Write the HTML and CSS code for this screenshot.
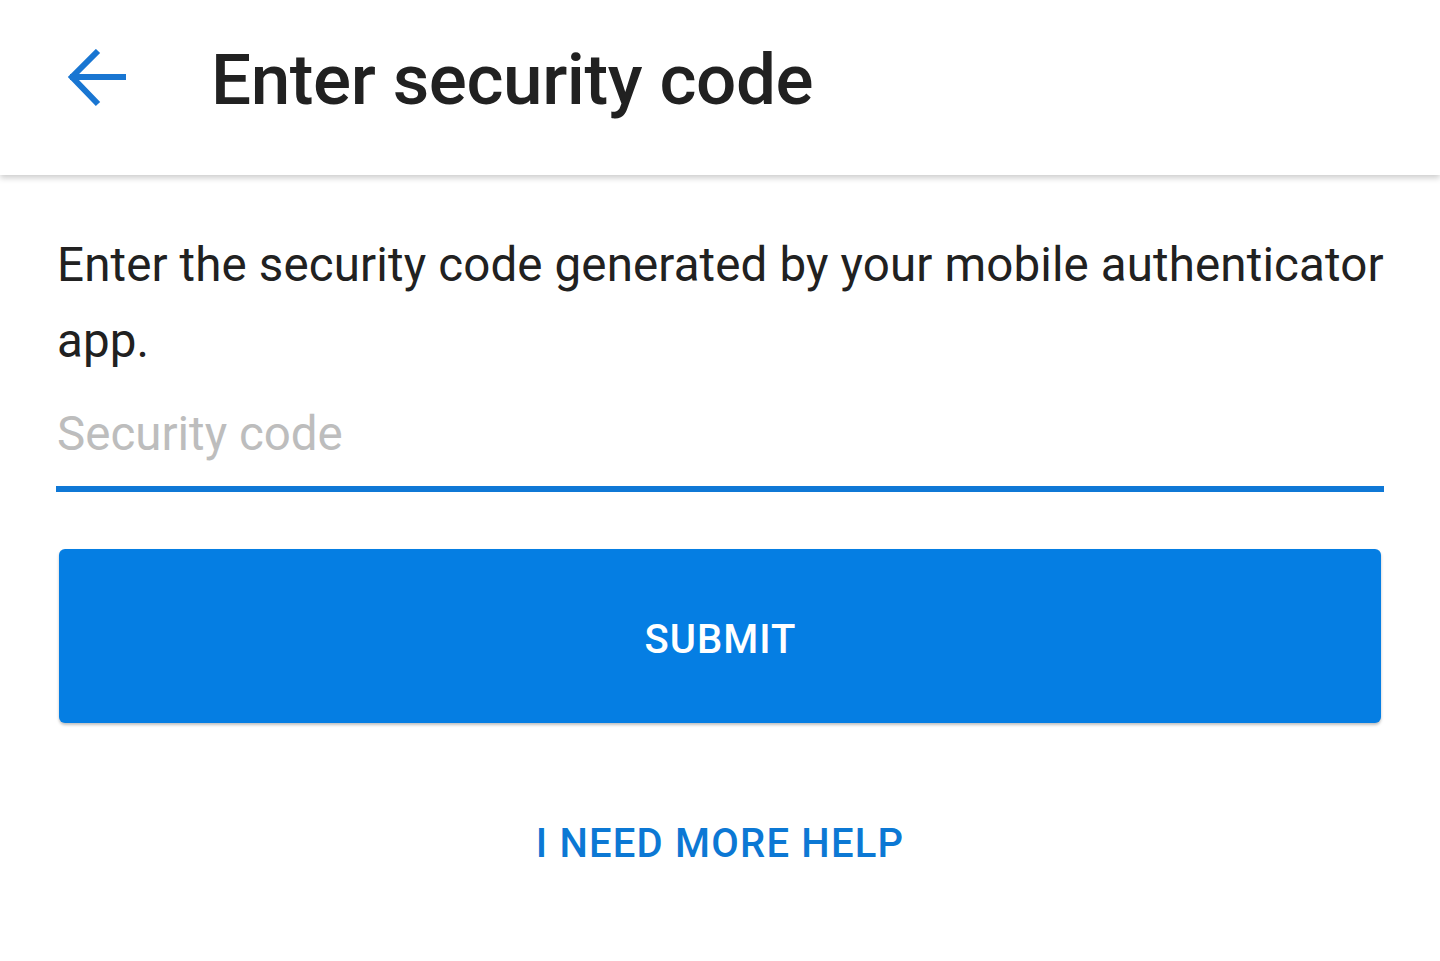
FILE: index.html
```html
<!DOCTYPE html>
<html lang="en">
<head>
<meta charset="utf-8">
<title>Enter security code</title>
<link rel="stylesheet" href="styles.css">
</head>
<body>
<header class="appbar">
  <button class="back" aria-label="Back">
    <svg width="62" height="62" viewBox="0 0 62 62" aria-hidden="true">
      <path d="M4 28H60" fill="none" stroke="#1976d2" stroke-width="6"/>
      <path d="M32 2L6 28L32 55" fill="none" stroke="#1976d2" stroke-width="6"/>
    </svg>
  </button>
  <h1 class="title">Enter security code</h1>
</header>
<main class="content">
  <p class="intro">Enter the security code generated by your mobile authenticator app.</p>
  <div class="field">
    <span class="placeholder">Security code</span>
  </div>
  <button class="submit">SUBMIT</button>
  <div class="help-row">
    <a class="help" href="#">I NEED MORE HELP</a>
  </div>
</main>
</body>
</html>
```
FILE: styles.css
```css
html, body {
  margin: 0;
  padding: 0;
  background: #ffffff;
  font-family: Roboto, "Noto Sans", "Liberation Sans", sans-serif;
}

.appbar {
  height: 175px;
  display: flex;
  align-items: center;
  background: #ffffff;
  box-shadow: 0 3px 6px rgba(0, 0, 0, 0.2);
  position: relative;
  z-index: 1;
}

.back {
  background: none;
  border: 0;
  padding: 0;
  margin: 49px 0 0 66px;
  width: 62px;
  height: 62px;
  display: flex;
  align-self: flex-start;
  cursor: pointer;
}

.title {
  margin: 0 0 0 83px;
  font-size: 71px;
  letter-spacing: -0.4px;
  font-weight: 500;
  color: #212121;
  line-height: 1;
  padding-bottom: 16px;
}

.content {
  padding: 52px 56px 0 56px;
}

.intro {
  margin: 0;
  font-size: 47.5px;
  letter-spacing: 0.13px;
  line-height: 76px;
  color: #212121;
  padding-left: 1px;
}

.field {
  margin-top: 27px;
  border-bottom: 6px solid #0f78d6;
  padding-bottom: 24px;
}

.placeholder {
  display: block;
  font-size: 47.5px;
  line-height: 56px;
  color: #bdbdbd;
  padding-left: 1px;
}

.submit {
  display: flex;
  align-items: center;
  justify-content: center;
  width: calc(100% - 6px);
  margin: 57px 3px 0 3px;
  height: 174px;
  border: 0;
  border-radius: 6px;
  background: #057ee3;
  color: #ffffff;
  font-family: inherit;
  font-size: 40px;
  letter-spacing: 1px;
  font-weight: 500;
  padding: 6px 0 0 1px;
  box-shadow: 0 2px 3px rgba(0, 0, 0, 0.25);
  cursor: pointer;
}

.help-row {
  display: flex;
  justify-content: center;
  margin-top: 101px;
}

.help {
  font-size: 40px;
  letter-spacing: 1.2px;
  line-height: 40px;
  font-weight: 500;
  color: #0c78d4;
  text-decoration: none;
}
```
